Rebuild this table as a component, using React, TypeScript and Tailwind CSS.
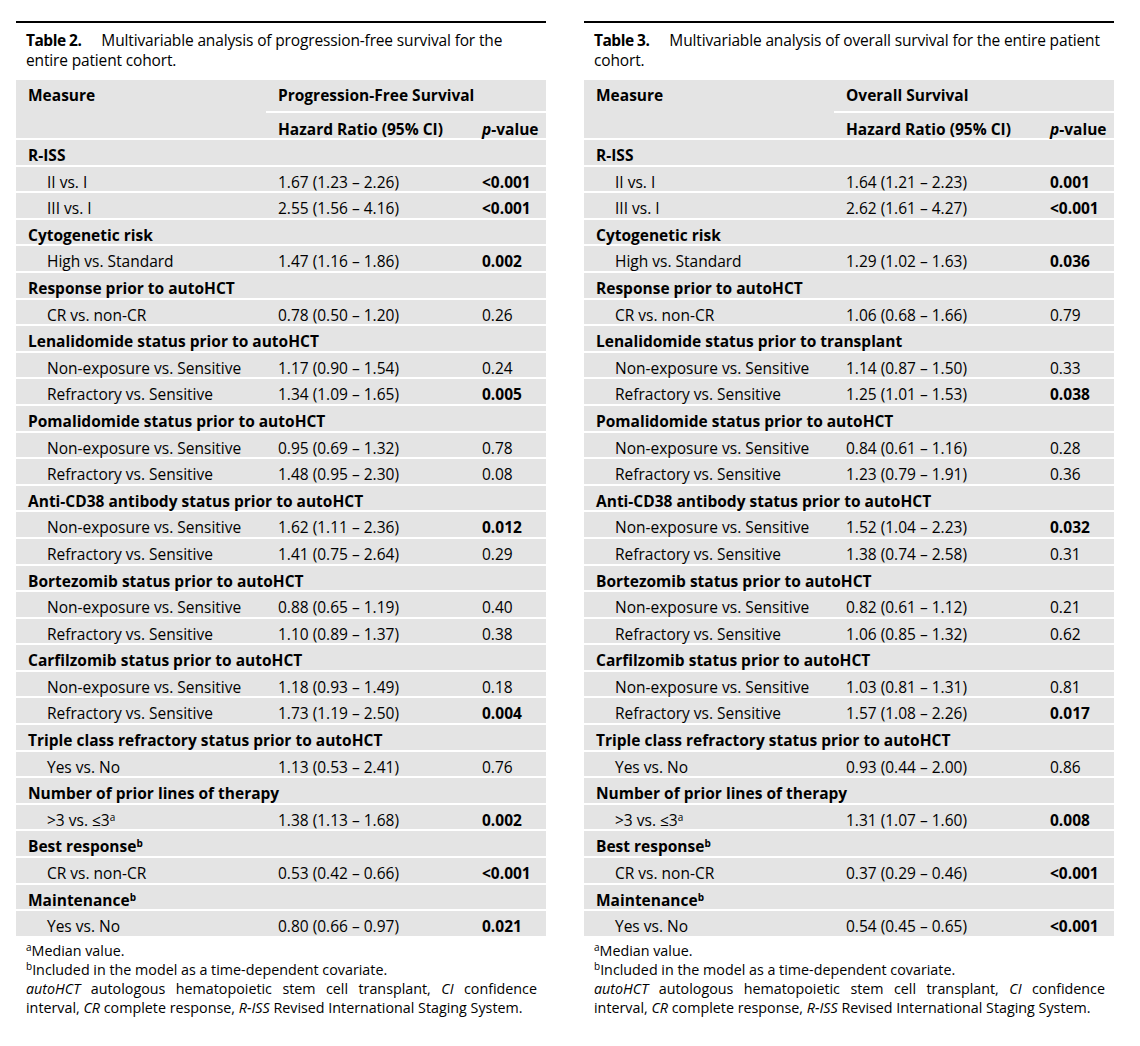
import React from 'react';

type Row = {
  label: React.ReactNode;
  hr?: string;
  p?: string;
  bold?: boolean;
  group?: boolean;
};

type TableSpec = {
  num: string;
  caption: string;
  outcome: string;
  rows: Row[];
};

const sup = (s: string) => <sup className="text-[10px]">{s}</sup>;

const g = (label: React.ReactNode): Row => ({ label, group: true });
const r = (label: React.ReactNode, hr: string, p: string, bold = false): Row => ({ label, hr, p, bold });

const pfsRows: Row[] = [
  g('R-ISS'),
  r('II vs. I', '1.67 (1.23 – 2.26)', '<0.001', true),
  r('III vs. I', '2.55 (1.56 – 4.16)', '<0.001', true),
  g('Cytogenetic risk'),
  r('High vs. Standard', '1.47 (1.16 – 1.86)', '0.002', true),
  g('Response prior to autoHCT'),
  r('CR vs. non-CR', '0.78 (0.50 – 1.20)', '0.26'),
  g('Lenalidomide status prior to autoHCT'),
  r('Non-exposure vs. Sensitive', '1.17 (0.90 – 1.54)', '0.24'),
  r('Refractory vs. Sensitive', '1.34 (1.09 – 1.65)', '0.005', true),
  g('Pomalidomide status prior to autoHCT'),
  r('Non-exposure vs. Sensitive', '0.95 (0.69 – 1.32)', '0.78'),
  r('Refractory vs. Sensitive', '1.48 (0.95 – 2.30)', '0.08'),
  g('Anti-CD38 antibody status prior to autoHCT'),
  r('Non-exposure vs. Sensitive', '1.62 (1.11 – 2.36)', '0.012', true),
  r('Refractory vs. Sensitive', '1.41 (0.75 – 2.64)', '0.29'),
  g('Bortezomib status prior to autoHCT'),
  r('Non-exposure vs. Sensitive', '0.88 (0.65 – 1.19)', '0.40'),
  r('Refractory vs. Sensitive', '1.10 (0.89 – 1.37)', '0.38'),
  g('Carfilzomib status prior to autoHCT'),
  r('Non-exposure vs. Sensitive', '1.18 (0.93 – 1.49)', '0.18'),
  r('Refractory vs. Sensitive', '1.73 (1.19 – 2.50)', '0.004', true),
  g('Triple class refractory status prior to autoHCT'),
  r('Yes vs. No', '1.13 (0.53 – 2.41)', '0.76'),
  g('Number of prior lines of therapy'),
  r(<>&gt;3 vs. ≤3{sup('a')}</>, '1.38 (1.13 – 1.68)', '0.002', true),
  g(<>Best response{sup('b')}</>),
  r('CR vs. non-CR', '0.53 (0.42 – 0.66)', '<0.001', true),
  g(<>Maintenance{sup('b')}</>),
  r('Yes vs. No', '0.80 (0.66 – 0.97)', '0.021', true),
];

const osRows: Row[] = [
  g('R-ISS'),
  r('II vs. I', '1.64 (1.21 – 2.23)', '0.001', true),
  r('III vs. I', '2.62 (1.61 – 4.27)', '<0.001', true),
  g('Cytogenetic risk'),
  r('High vs. Standard', '1.29 (1.02 – 1.63)', '0.036', true),
  g('Response prior to autoHCT'),
  r('CR vs. non-CR', '1.06 (0.68 – 1.66)', '0.79'),
  g('Lenalidomide status prior to transplant'),
  r('Non-exposure vs. Sensitive', '1.14 (0.87 – 1.50)', '0.33'),
  r('Refractory vs. Sensitive', '1.25 (1.01 – 1.53)', '0.038', true),
  g('Pomalidomide status prior to autoHCT'),
  r('Non-exposure vs. Sensitive', '0.84 (0.61 – 1.16)', '0.28'),
  r('Refractory vs. Sensitive', '1.23 (0.79 – 1.91)', '0.36'),
  g('Anti-CD38 antibody status prior to autoHCT'),
  r('Non-exposure vs. Sensitive', '1.52 (1.04 – 2.23)', '0.032', true),
  r('Refractory vs. Sensitive', '1.38 (0.74 – 2.58)', '0.31'),
  g('Bortezomib status prior to autoHCT'),
  r('Non-exposure vs. Sensitive', '0.82 (0.61 – 1.12)', '0.21'),
  r('Refractory vs. Sensitive', '1.06 (0.85 – 1.32)', '0.62'),
  g('Carfilzomib status prior to autoHCT'),
  r('Non-exposure vs. Sensitive', '1.03 (0.81 – 1.31)', '0.81'),
  r('Refractory vs. Sensitive', '1.57 (1.08 – 2.26)', '0.017', true),
  g('Triple class refractory status prior to autoHCT'),
  r('Yes vs. No', '0.93 (0.44 – 2.00)', '0.86'),
  g('Number of prior lines of therapy'),
  r(<>&gt;3 vs. ≤3{sup('a')}</>, '1.31 (1.07 – 1.60)', '0.008', true),
  g(<>Best response{sup('b')}</>),
  r('CR vs. non-CR', '0.37 (0.29 – 0.46)', '<0.001', true),
  g(<>Maintenance{sup('b')}</>),
  r('Yes vs. No', '0.54 (0.45 – 0.65)', '<0.001', true),
];

const tables: TableSpec[] = [
  {
    num: 'Table 2.',
    caption: 'Multivariable analysis of progression-free survival for the entire patient cohort.',
    outcome: 'Progression-Free Survival',
    rows: pfsRows,
  },
  {
    num: 'Table 3.',
    caption: 'Multivariable analysis of overall survival for the entire patient cohort.',
    outcome: 'Overall Survival',
    rows: osRows,
  },
];

const cols = 'grid grid-cols-[250px_204px_1fr]';

const SurvivalTable = ({ t }: { t: TableSpec }) => (
  <div className="w-[530px]">
    <div className="border-t-2 border-black pt-[7px] pl-[10px] pr-[6px] text-[15.5px] leading-[20px] tracking-[-0.15px]">
      <span className="font-bold tracking-[-0.5px]">{t.num}</span>
      <span className="pl-[20px]">{t.caption}</span>
    </div>

    <div className="mt-[10px] bg-[#e4e4e4]">
      {/* header */}
      <div className={`${cols} h-[31px] items-center font-bold`}>
        <div className="pl-[12px]">Measure</div>
        <div className="col-span-2 pl-[12px]">{t.outcome}</div>
      </div>
      <div className={`${cols} h-[27px] items-center font-bold`}>
        <div />
        <div className="col-span-2 grid grid-cols-[204px_1fr] h-full items-center border-t-2 border-white pt-[5px]">
          <div className="pl-[12px]">Hazard Ratio (95% CI)</div>
          <div className="pl-[12px]">
            <i>p</i>-value
          </div>
        </div>
      </div>

      {/* body */}
      {t.rows.map((row, i) => (
        <div key={i} className={`${cols} h-[26.6px] items-center border-t-2 border-white pt-[4px]`}>
          {row.group ? (
            <div className="col-span-3 pl-[12px] font-bold whitespace-nowrap">{row.label}</div>
          ) : (
            <>
              <div className="pl-[31px] whitespace-nowrap">{row.label}</div>
              <div className="pl-[12px]">{row.hr}</div>
              <div className={`pl-[12px] ${row.bold ? 'font-bold' : ''}`}>{row.p}</div>
            </>
          )}
        </div>
      ))}
    </div>

    <div className="pt-[5px] pl-[10px] pr-[9px] text-[14.3px] leading-[19px]">
      <p>{sup('a')}Median value.</p>
      <p>{sup('b')}Included in the model as a time-dependent covariate.</p>
      <p className="text-justify">
        <i>autoHCT</i> autologous hematopoietic stem cell transplant, <i>CI</i> confidence interval, <i>CR</i> complete
        response, <i>R-ISS</i> Revised International Staging System.
      </p>
    </div>
  </div>
);

export default function App() {
  return (
    <div className="w-[1140px] h-[1046px] bg-white text-black font-['Open_Sans',sans-serif] text-[15.5px]">
      <div className="flex gap-[38px] pl-[16px] pt-[21px]">
        {tables.map((t) => (
          <SurvivalTable key={t.num} t={t} />
        ))}
      </div>
    </div>
  );
}
